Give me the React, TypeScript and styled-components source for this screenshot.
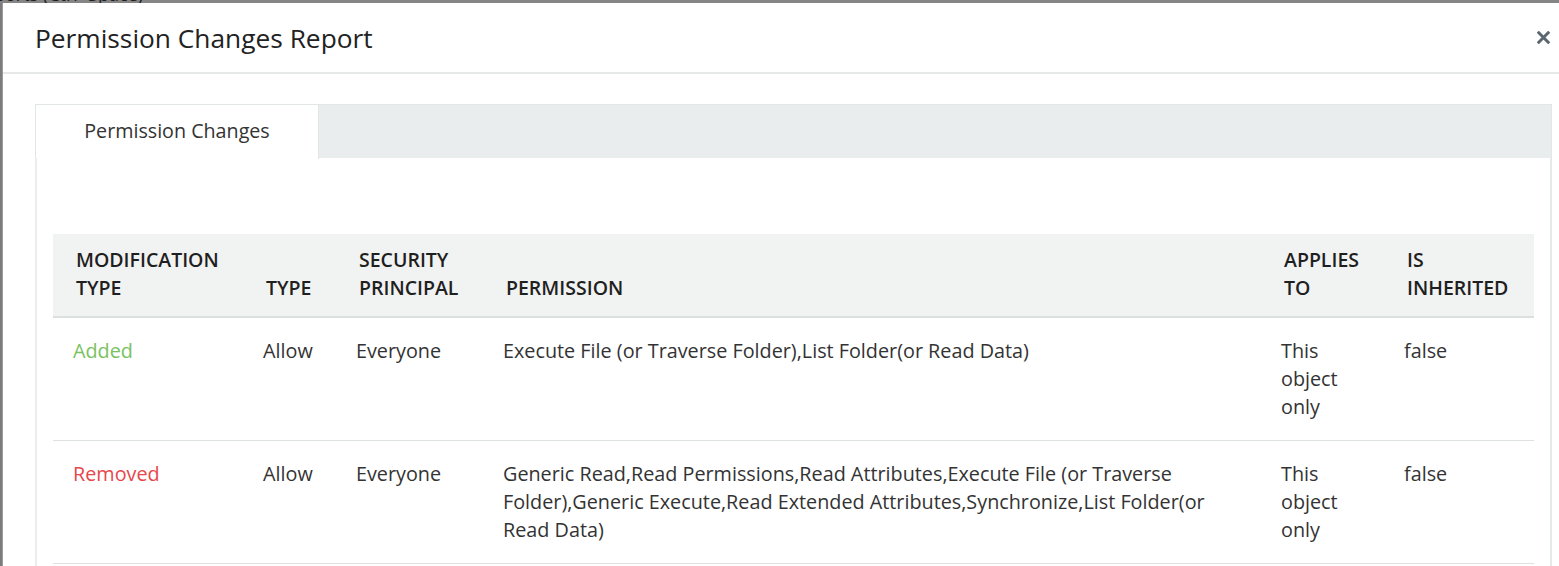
import React from "react";
import styled, { createGlobalStyle } from "styled-components";

const Global = createGlobalStyle`
  html, body {
    margin: 0;
    padding: 0;
    background: #7c7c7c;
    overflow: hidden;
    font-family: "Open Sans", "Noto Sans", sans-serif;
  }
`;

const Backdrop = styled.div`
  height: 3px;
  overflow: hidden;
  background: #858585;
`;

const BackdropText = styled.div`
  font-size: 18px;
  line-height: 18px;
  margin-top: -15px;
  color: #1e1e1e;
  white-space: nowrap;
  margin-left: -6px;
`;

const Modal = styled.div`
  margin-left: 2px;
  background: #ffffff;
  height: 563px;
  display: flex;
  flex-direction: column;
  border-left: 1px solid #9a9a9a;
`;

const Header = styled.div`
  height: 69px;
  flex: none;
  display: flex;
  align-items: center;
  justify-content: space-between;
  padding: 0 9px 0 32px;
  border-bottom: 2px solid #e6e7e7;
`;

const Title = styled.h1`
  margin: 0;
  font-size: 26.3px;
  font-weight: 400;
  color: #222;
`;

const CloseButton = styled.button`
  border: none;
  background: none;
  padding: 0;
  width: 13px;
  height: 13px;
  display: flex;
  cursor: pointer;
`;

const Body = styled.div`
  padding: 30px 7px 0 32px;
  flex: 1;
  display: flex;
  flex-direction: column;
`;

const TabBar = styled.div`
  display: flex;
  height: 53px;
  flex: none;
  background: #e9eded;
  border-top: 1px solid #e2e6e6;
  border-right: 1px solid #e2e6e6;
  border-radius: 3px 0 0 0;
`;

const Tab = styled.div<{ $active?: boolean }>`
  width: 282px;
  display: flex;
  align-items: center;
  justify-content: center;
  padding-bottom: 4px;
  font-size: 19.7px;
  color: #333;
  background: ${(p) => (p.$active ? "#ffffff" : "transparent")};
  border-left: 1px solid #e2e6e6;
  border-right: 1px solid #e2e6e6;
  border-top: 1px solid #e2e6e6;
  margin-top: -1px;
  margin-bottom: -1px;
`;

const Panel = styled.div`
  flex: 1;
  border-left: 2px solid #eceeee;
  border-right: 2px solid #e6e9e9;
  padding: 76px 16px 0 16px;
`;

const Table = styled.table`
  width: 100%;
  border-collapse: collapse;
  table-layout: fixed;
  font-size: 19.8px;
  line-height: 28px;
`;

const HeadCell = styled.th`
  background: #f1f2f2;
  padding: 12px 10px 14px 23px;
  vertical-align: bottom;
  text-align: left;
  font-size: 19.5px;
  font-weight: 600;
  color: #1f1f1f;
  text-transform: uppercase;
  border-bottom: 2px solid #dcdfe0;
`;

const Cell = styled.td<{ $tone?: "added" | "removed" }>`
  padding: 19px 20px;
  vertical-align: top;
  color: ${(p) =>
    p.$tone === "added" ? "#79c261" : p.$tone === "removed" ? "#e6474b" : "#333"};
  border-bottom: 1px solid #dee1e1;
`;

const columns = [190, 93, 147, 778, 123, 150];

const rows = [
  {
    mod: "Added",
    tone: "added" as const,
    type: "Allow",
    principal: "Everyone",
    permission: "Execute File (or Traverse Folder),List Folder(or Read Data)",
    applies: "This object only",
    inherited: "false",
  },
  {
    mod: "Removed",
    tone: "removed" as const,
    type: "Allow",
    principal: "Everyone",
    permission:
      "Generic Read,Read Permissions,Read Attributes,Execute File (or Traverse Folder),Generic Execute,Read Extended Attributes,Synchronize,List Folder(or Read Data)",
    applies: "This object only",
    inherited: "false",
  },
];

export default function App() {
  return (
    <>
      <Global />
      <Backdrop>
        <BackdropText>ports (Ctrl+Space)</BackdropText>
      </Backdrop>
      <Modal>
        <Header>
          <Title>Permission Changes Report</Title>
          <CloseButton aria-label="Close">
            <svg width="13" height="13" viewBox="0 0 13 13">
              <path d="M1.8 1.8 L11.2 11.2 M11.2 1.8 L1.8 11.2" stroke="#5a6670" strokeWidth="3" strokeLinecap="square" />
            </svg>
          </CloseButton>
        </Header>
        <Body>
          <TabBar>
            <Tab $active>Permission Changes</Tab>
          </TabBar>
          <Panel>
            <Table>
              <colgroup>
                {columns.map((w, i) => (
                  <col key={i} style={{ width: w }} />
                ))}
              </colgroup>
              <thead>
                <tr>
                  <HeadCell>Modification Type</HeadCell>
                  <HeadCell>Type</HeadCell>
                  <HeadCell>Security Principal</HeadCell>
                  <HeadCell>Permission</HeadCell>
                  <HeadCell>Applies To</HeadCell>
                  <HeadCell>Is Inherited</HeadCell>
                </tr>
              </thead>
              <tbody>
                {rows.map((r, i) => (
                  <tr key={i}>
                    <Cell $tone={r.tone}>{r.mod}</Cell>
                    <Cell>{r.type}</Cell>
                    <Cell>{r.principal}</Cell>
                    <Cell>{r.permission}</Cell>
                    <Cell>{r.applies}</Cell>
                    <Cell>{r.inherited}</Cell>
                  </tr>
                ))}
              </tbody>
            </Table>
          </Panel>
        </Body>
      </Modal>
    </>
  );
}
